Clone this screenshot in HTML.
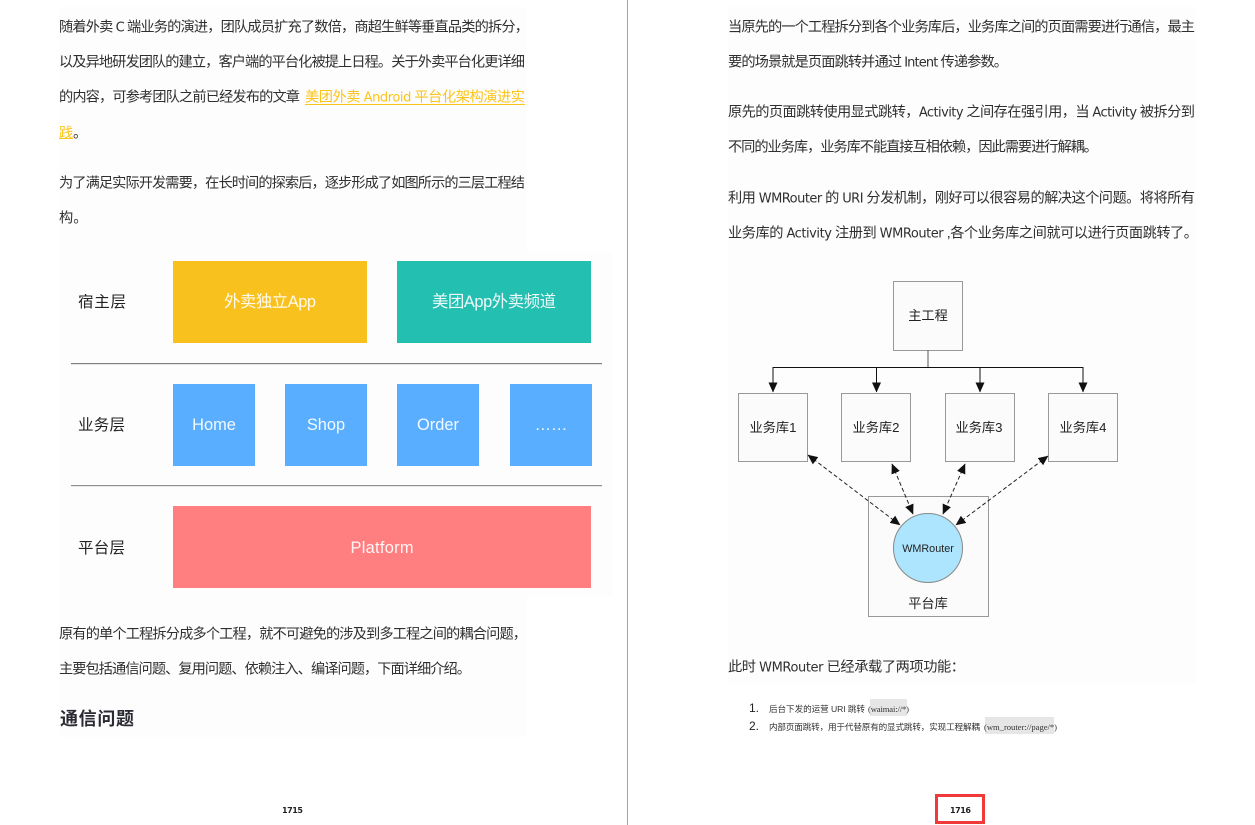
<!DOCTYPE html>
<html lang="zh">
<head>
<meta charset="utf-8">
<style>
html,body{margin:0;padding:0;background:#fff;width:1255px;height:825px;overflow:hidden}
svg{display:block;filter:blur(.3px)}
text{font-family:"Liberation Sans","Noto Sans CJK SC",sans-serif}
.b{font-size:14.2px;fill:#2f2f2f}
.l{font-size:14.2px;fill:#fcc419}
.e{font-family:"DejaVu Sans",sans-serif;font-size:13px}
.d{font-size:15.5px;fill:#222}
.w{font-size:16.4px;fill:#fff;fill-opacity:.92;text-anchor:middle}
.m{font-size:13.2px;fill:#222;text-anchor:middle}
.n{font-size:8px;font-weight:bold;fill:#222;font-family:"DejaVu Sans",sans-serif}
.s{font-size:8.6px;fill:#333}
.c{font-size:8.6px;fill:#333;font-family:"Liberation Serif","Noto Serif CJK SC",serif}
.box{fill:#fbfbfb;stroke:#999;stroke-width:1}
</style>
</head>
<body>
<svg width="1255" height="825" viewBox="0 0 1255 825" xmlns="http://www.w3.org/2000/svg">
<defs>
<marker id="a" markerUnits="userSpaceOnUse" markerWidth="10" markerHeight="10" refX="9.500" refY="4.500" orient="auto-start-reverse"><path d="M0 0L10 4.500L0 9Z" fill="#111"/></marker>
</defs>
<rect width="1255" height="825" fill="#fff"/>
<rect x="627" y="0" width="1" height="825" fill="#a3a3a3"/>

<!-- page tints -->
<rect x="59" y="7" width="468" height="730" fill="#fdfdfd"/>
<rect x="59" y="253" width="554" height="344" fill="#fdfdfd"/>
<rect x="728" y="7" width="468" height="676" fill="#fdfdfd"/>

<!-- left text -->
<text class="b" x="59" y="31.500" textLength="470">随着外卖 <tspan class="e">C</tspan> 端业务的演进，团队成员扩充了数倍，商超生鲜等垂直品类的拆分，</text>
<text class="b" x="59" y="66.500" textLength="466">以及异地研发团队的建立，客户端的平台化被提上日程。关于外卖平台化更详细</text>
<text class="b" x="59" y="101.500" textLength="241">的内容，可参考团队之前已经发布的文章</text>
<text class="l" x="305" y="101.500" textLength="220">美团外卖 <tspan class="e">Android</tspan> 平台化架构演进实</text>
<rect x="305" y="104" width="220" height="1" fill="#fcc419"/>
<text class="l" x="59" y="137.500" textLength="14">践</text>
<rect x="59" y="138" width="14" height="1" fill="#fcc419"/>
<text class="b" x="73" y="137.500">。</text>
<text class="b" x="59" y="187.500" textLength="466">为了满足实际开发需要，在长时间的探索后，逐步形成了如图所示的三层工程结</text>
<text class="b" x="59" y="222.500">构。</text>

<!-- layer diagram -->
<text class="d" x="78" y="307" textLength="48">宿主层</text>
<text class="d" x="78" y="430" textLength="47">业务层</text>
<text class="d" x="78" y="553" textLength="47">平台层</text>
<rect x="173" y="261" width="194" height="82" fill="#f8c11e"/>
<rect x="397" y="261" width="194" height="82" fill="#23bfb1"/>
<rect x="173" y="384" width="82" height="82" fill="#5aaeff"/>
<rect x="285" y="384" width="82" height="82" fill="#5aaeff"/>
<rect x="397" y="384" width="82" height="82" fill="#5aaeff"/>
<rect x="510" y="384" width="82" height="82" fill="#5aaeff"/>
<rect x="173" y="506" width="418" height="82" fill="#ff7e80"/>
<rect x="71" y="363" width="531" height="1.200" fill="#808080"/>
<rect x="71" y="485" width="531" height="1.200" fill="#909090"/>
<text class="w" x="270" y="307" textLength="92">外卖独立App</text>
<text class="w" x="494" y="307" textLength="124">美团App外卖频道</text>
<text class="w" x="214" y="430">Home</text>
<text class="w" x="326" y="430">Shop</text>
<text class="w" x="438" y="430">Order</text>
<text class="w" x="551" y="430">……</text>
<text class="w" x="382" y="553" textLength="63">Platform</text>

<text class="b" x="59" y="638.500" textLength="468">原有的单个工程拆分成多个工程，就不可避免的涉及到多工程之间的耦合问题，</text>
<text class="b" x="59" y="673.500" textLength="412">主要包括通信问题、复用问题、依赖注入、编译问题，下面详细介绍。</text>
<text x="60" y="725" font-size="18" font-weight="bold" fill="#2a2a33" textLength="74">通信问题</text>
<text class="n" x="282" y="813" textLength="21">1715</text>

<!-- right text -->
<text class="b" x="728" y="31.500" textLength="467">当原先的一个工程拆分到各个业务库后，业务库之间的页面需要进行通信，最主</text>
<text class="b" x="728" y="66.500" textLength="280">要的场景就是页面跳转并通过 <tspan class="e">Intent</tspan> 传递参数。</text>
<text class="b" x="728" y="116.500" textLength="467">原先的页面跳转使用显式跳转，<tspan class="e">Activity</tspan> 之间存在强引用，当 <tspan class="e">Activity</tspan> 被拆分到</text>
<text class="b" x="728" y="151.500" textLength="370">不同的业务库，业务库不能直接互相依赖，因此需要进行解耦。</text>
<text class="b" x="728" y="202.500" textLength="467">利用 <tspan class="e">WMRouter</tspan> 的 <tspan class="e">URI</tspan> 分发机制，刚好可以很容易的解决这个问题。将将所有</text>
<text class="b" x="728" y="237.500" textLength="470">业务库的 <tspan class="e">Activity</tspan> 注册到 <tspan class="e">WMRouter</tspan> ,各个业务库之间就可以进行页面跳转了。</text>

<!-- architecture diagram -->
<rect class="box" x="893.500" y="281.500" width="69" height="69"/>
<text class="m" x="928" y="320">主工程</text>
<rect class="box" x="738.500" y="393.500" width="69" height="68"/>
<rect class="box" x="841.500" y="393.500" width="69" height="68"/>
<rect class="box" x="945.500" y="393.500" width="69" height="68"/>
<rect class="box" x="1048.500" y="393.500" width="69" height="68"/>
<text class="m" x="773" y="432">业务库1</text>
<text class="m" x="876" y="432">业务库2</text>
<text class="m" x="979" y="432">业务库3</text>
<text class="m" x="1083" y="432">业务库4</text>
<rect class="box" x="868.500" y="496.500" width="120" height="120"/>
<text class="m" x="928" y="608">平台库</text>
<path d="M928 350V367" stroke="#555" fill="none"/>
<g stroke="#111" stroke-width="1" fill="none">
<path d="M773 392V367.500H1083V392" marker-end="url(#a)"/>
<path d="M773 367.500V392" marker-end="url(#a)"/>
<path d="M876.500 367.500V392" marker-end="url(#a)"/>
<path d="M980 367.500V392" marker-end="url(#a)"/>
</g>
<g stroke="#222" stroke-width="1" fill="none" stroke-dasharray="4 2.500">
<path d="M808 455L900 525" marker-start="url(#a)" marker-end="url(#a)"/>
<path d="M892 464L913 514" marker-start="url(#a)" marker-end="url(#a)"/>
<path d="M965 464L943 514" marker-start="url(#a)" marker-end="url(#a)"/>
<path d="M1048 456L956 525" marker-start="url(#a)" marker-end="url(#a)"/>
</g>
<circle cx="928" cy="548" r="34.500" fill="#ade5fe" stroke="#888"/>
<text x="928" y="552" font-size="10.800" fill="#222" text-anchor="middle">WMRouter</text>

<text class="b" x="728" y="671.500" textLength="237">此时 <tspan class="e">WMRouter</tspan> 已经承载了两项功能：</text>

<!-- list -->
<rect x="870" y="699" width="37" height="17" fill="#e6e6e6"/>
<rect x="985" y="717" width="69" height="17" fill="#e6e6e6"/>
<text x="749" y="712" font-size="12" fill="#222">1.</text>
<text x="749" y="730" font-size="12" fill="#222">2.</text>
<text class="s" x="769" y="712" textLength="96">后台下发的运营 URI 跳转</text>
<text class="c" x="868" y="712" textLength="41">(waimai://*)</text>
<text class="s" x="769" y="730" textLength="211">内部页面跳转，用于代替原有的显式跳转，实现工程解耦</text>
<text class="c" x="984" y="730" textLength="73">(wm_router://page/*)</text>

<text class="n" x="950" y="813" textLength="21">1716</text>
<rect x="936.500" y="795.500" width="47" height="27" fill="none" stroke="#f03a3a" stroke-width="3"/>
</svg>
</body>
</html>
